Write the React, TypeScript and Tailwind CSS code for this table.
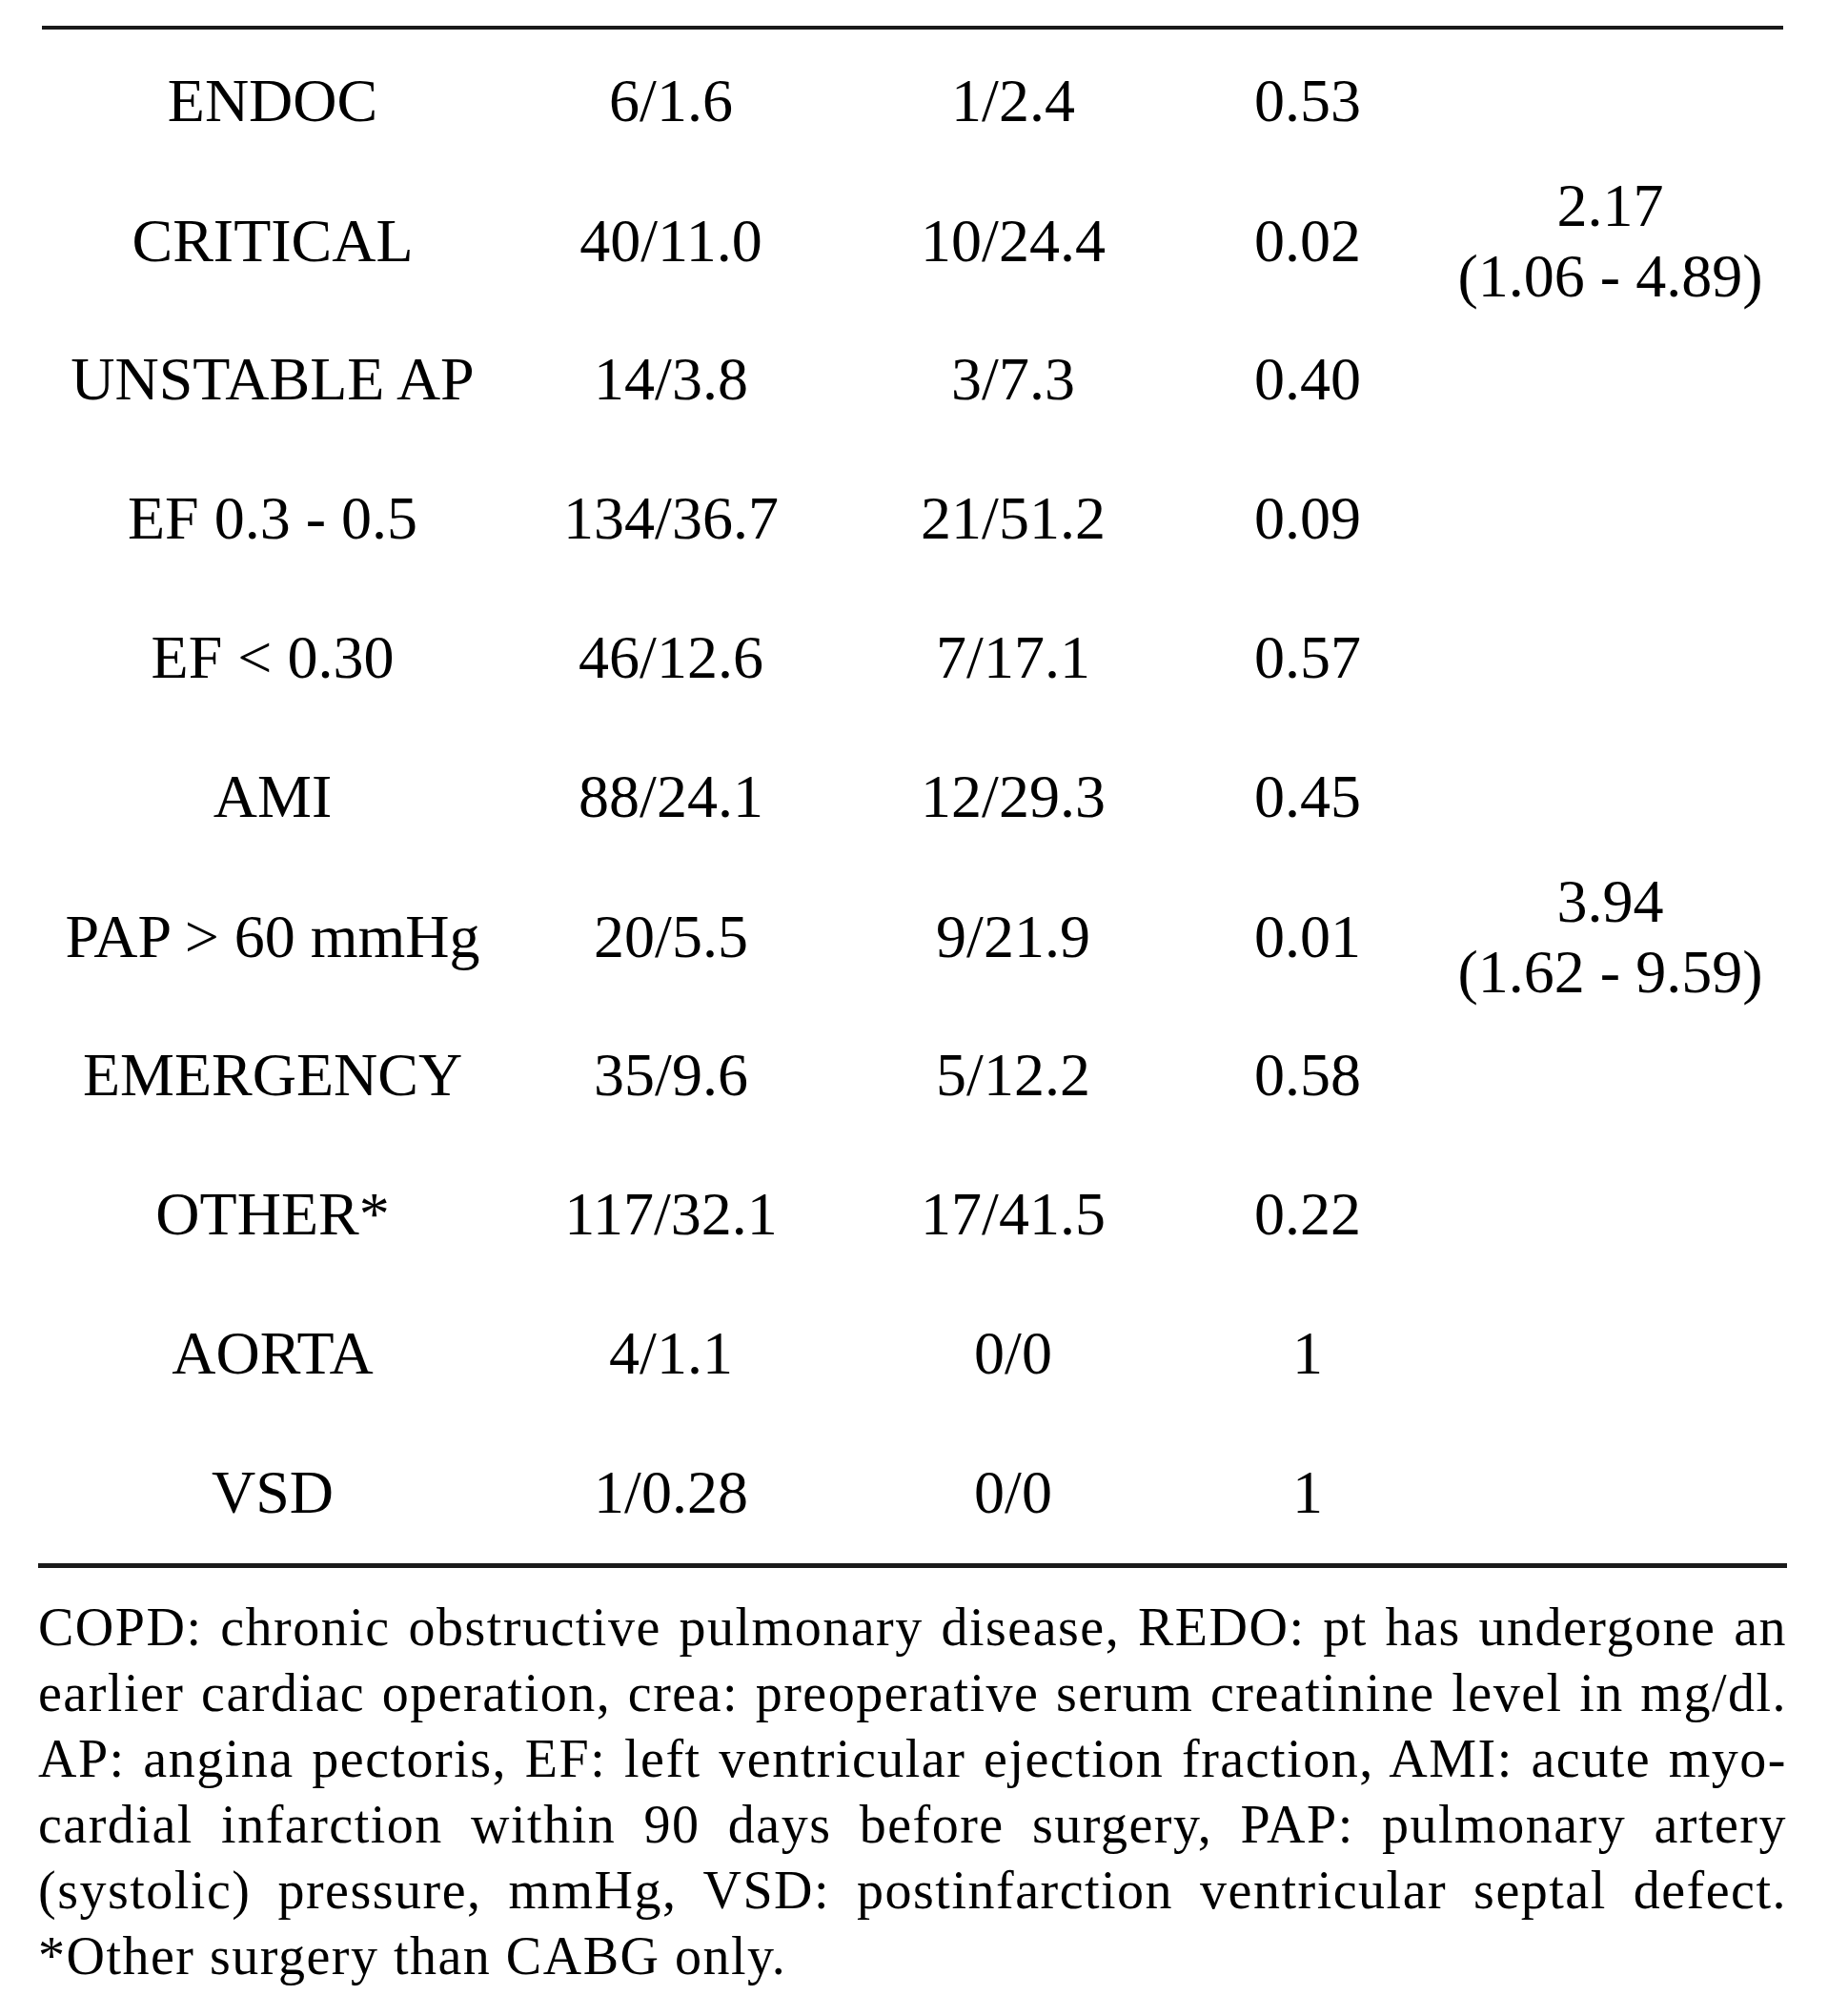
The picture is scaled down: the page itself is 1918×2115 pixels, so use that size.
import React from 'react';

const rows = [
  { label: 'ENDOC', a: '6/1.6', b: '1/2.4', p: '0.53', or: null },
  { label: 'CRITICAL', a: '40/11.0', b: '10/24.4', p: '0.02', or: ['2.17', '(1.06 - 4.89)'] },
  { label: 'UNSTABLE AP', a: '14/3.8', b: '3/7.3', p: '0.40', or: null },
  { label: 'EF 0.3 - 0.5', a: '134/36.7', b: '21/51.2', p: '0.09', or: null },
  { label: 'EF < 0.30', a: '46/12.6', b: '7/17.1', p: '0.57', or: null },
  { label: 'AMI', a: '88/24.1', b: '12/29.3', p: '0.45', or: null },
  { label: 'PAP > 60 mmHg', a: '20/5.5', b: '9/21.9', p: '0.01', or: ['3.94', '(1.62 - 9.59)'] },
  { label: 'EMERGENCY', a: '35/9.6', b: '5/12.2', p: '0.58', or: null },
  { label: 'OTHER*', a: '117/32.1', b: '17/41.5', p: '0.22', or: null },
  { label: 'AORTA', a: '4/1.1', b: '0/0', p: '1', or: null },
  { label: 'VSD', a: '1/0.28', b: '0/0', p: '1', or: null },
];

const notes = [
  'COPD: chronic obstructive pulmonary disease, REDO: pt has undergone an',
  'earlier cardiac operation, crea: preoperative serum creatinine level in mg/dl.',
  'AP: angina pectoris, EF: left ventricular ejection fraction, AMI: acute myo-',
  'cardial infarction within 90 days before surgery, PAP: pulmonary artery',
  '(systolic) pressure, mmHg, VSD: postinfarction ventricular septal defect.',
];

export default function App() {
  return (
    <div className="min-h-[2115px] bg-white font-['Liberation_Serif','Times_New_Roman',serif] text-black">
      <div className="pt-[27px] pl-[44px] pr-[47px]">
        <div className="border-t-4 border-[#1a1a1a]" />

        <div className="mt-[2px]">
          {rows.map((r) => (
            <div
              key={r.label}
              className="grid h-[146px] grid-cols-[484px_352px_366px_252px_1fr] items-center text-center text-[64px] leading-none"
            >
              <div>{r.label}</div>
              <div>{r.a}</div>
              <div>{r.b}</div>
              <div>{r.p}</div>
              <div className="pl-[10px] leading-[74px]">
                {r.or && (
                  <>
                    <div>{r.or[0]}</div>
                    <div>{r.or[1]}</div>
                  </>
                )}
              </div>
            </div>
          ))}
        </div>

        <div className="-ml-[4px] -mr-[4px] mt-[1px] border-t-[5px] border-[#1a1a1a]" />
      </div>

      {/* footnote */}
      <div className="mt-[28px] pl-[40px] pr-[43px] text-[56px] leading-[69px] tracking-[1.5px]">
        {notes.map((n) => (
          <div key={n} className="whitespace-nowrap text-justify [text-align-last:justify]">
            {n}
          </div>
        ))}
        <div>*Other surgery than CABG only.</div>
      </div>
    </div>
  );
}
